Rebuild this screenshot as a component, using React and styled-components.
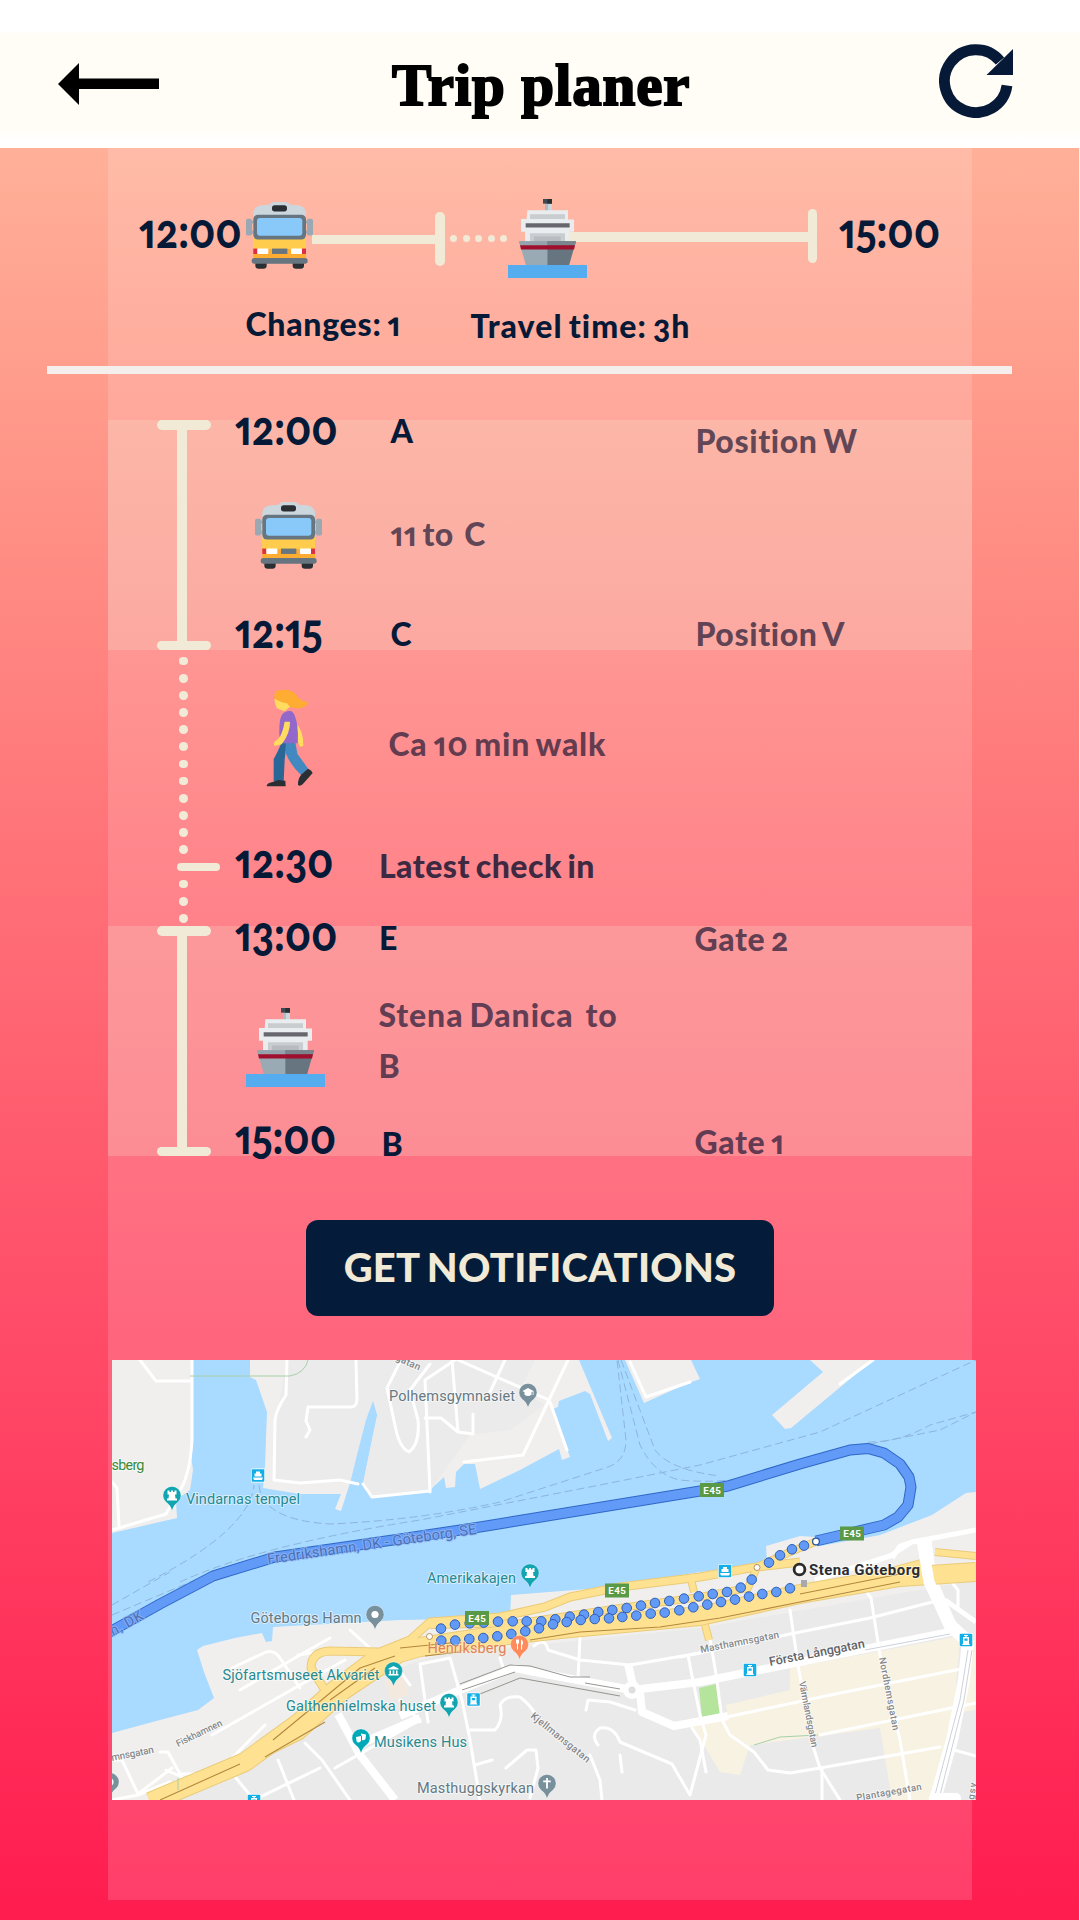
import React from "react";
import styled, { createGlobalStyle, css } from "styled-components";

const NAVY = "#061a38";
const CREAM = "#f1ead7";

const GlobalStyle = createGlobalStyle`
  *, *::before, *::after { box-sizing: border-box; }
  body {
    margin: 0;
    background: #fff;
    font-family: Lato, "Open Sans", sans-serif;
    font-variant-ligatures: none;
    font-variant-numeric: oldstyle-nums proportional-nums;
  }
`;

/* ---------- page frame ---------- */

const Page = styled.div`
  width: 1080px;
  height: 1920px;
  display: flex;
  flex-direction: column;
  overflow: hidden;
`;

const Header = styled.header`
  height: 148px;
  flex: none;
  display: grid;
  grid-template-columns: 392px 1fr 74px;
  padding: 0 67px 0 0;
  background: linear-gradient(#fff 32px, #fffdf5 33px, #fffdf5 128px, #fff 142px);
`;

const BackButton = styled.button`
  border: 0;
  padding: 63px 0 0 58px;
  background: none;
  display: flex;
  align-items: flex-start;
`;

const Title = styled.h1`
  margin: 50px 0 0;
  font: 700 59px/70px "Liberation Serif", "DejaVu Serif", serif;
  letter-spacing: 0.85px;
  color: #000;
  white-space: nowrap;
  -webkit-text-stroke: 2px #000;
`;

const RefreshButton = styled.button`
  border: 0;
  padding: 42px 0 0;
  background: none;
  display: flex;
  align-items: flex-start;
`;

const Main = styled.main`
  flex: 1;
  min-height: 0;
  padding: 0 107px 20px 108px;
  border-right: 1px solid #fff0ee;
  background: linear-gradient(#ffb098, #ff9b8b 14%, #ff7077 41.3%, #ff4766 70%, #ff1c4f);
`;

const Panel = styled.section`
  height: 100%;
  display: flex;
  flex-direction: column;
  background: rgba(255, 255, 255, 0.15);
`;

/* ---------- text ---------- */

const Time = styled.time`
  display: block;
  font-size: 48px;
  font-weight: 900;
  line-height: 20px;
  color: ${NAVY};
  white-space: nowrap;
  margin: ${(p) => p.$drop || 0}px 0 0 -1px;
  transform: scaleX(0.86);
  transform-origin: left;
`;

const tones = { strong: NAVY, medium: "#3d2a42", soft: "rgba(38, 28, 56, 0.72)" };

const Label = styled.span`
  display: block;
  font-size: 32px;
  font-weight: 900;
  line-height: ${(p) => (p.$multi ? 51 : 20)}px;
  letter-spacing: ${(p) => p.$track ?? 0.6}px;
  word-spacing: -2.5px;
  color: ${(p) => tones[p.$tone || "strong"]};
  white-space: pre;
  margin: ${(p) => p.$drop || 0}px 0 0 ${(p) => (p.$shift || 0) - 0.6}px;
`;

/* ---------- summary ---------- */

const Strip = styled.div`
  display: flex;
  align-items: center;
  height: 130px;
  padding: 51px 0 0 32px;
`;

const StripTime = styled.div`
  width: 106px;
  flex: none;
  margin-left: ${(p) => p.$gap || 0}px;
`;

const StripIcon = styled.div`
  position: relative;
  z-index: 1;
  flex: none;
  display: flex;
  margin-bottom: ${(p) => p.$lift || 0}px;
`;

const Track = styled.i`
  flex: none;
  width: ${(p) => p.$width}px;
  height: 9.5px;
  margin: ${(p) => p.$drop || 0}px 0 ${(p) => p.$lift || 0}px ${(p) => p.$under || 0}px;
  background: ${CREAM};
`;

const Stop = styled.i`
  flex: none;
  width: 9.5px;
  height: 54px;
  border-radius: 5px;
  margin-bottom: ${(p) => p.$lift || 0}px;
  background: ${CREAM};
`;

const StripDots = styled.div`
  flex: none;
  width: 63px;
  display: flex;
  gap: 5.5px;
  padding-left: 5.5px;
`;

const Dot = styled.i`
  flex: none;
  width: ${(p) => p.$size}px;
  height: ${(p) => p.$size}px;
  border-radius: 50%;
  background: ${CREAM};
`;

const Facts = styled.div`
  display: grid;
  grid-template-columns: 225px 1fr;
  height: 88px;
  padding: 35.5px 0 0 138px;
`;

const Divider = styled.hr`
  flex: none;
  width: 965px;
  height: 7.5px;
  border: 0;
  margin: 0 0 46.5px -61px;
  background: #f4efec;
`;

/* ---------- itinerary ---------- */

const Section = styled.section`
  flex: none;
  display: flex;
  height: ${(p) => p.$height}px;
  ${(p) =>
    p.$lit &&
    css`
      background: rgba(240, 235, 216, 0.22);
    `}
`;

const Rail = styled.div`
  width: 128px;
  flex: none;
  padding-left: 48.5px;
`;

const LegBar = styled.div`
  width: 54px;
  height: 100%;
  display: flex;
  flex-direction: column;
  align-items: center;
`;

const Cap = styled.i`
  width: 54px;
  height: 9.5px;
  border-radius: 5px;
  background: ${CREAM};
`;

const Stem = styled.i`
  width: 9.6px;
  flex: 1;
  margin: -3px 3px -3px 0;
  background: ${CREAM};
`;

const WalkDots = styled.div`
  display: flex;
  flex-direction: column;
  padding: 2.4px 0 0 20.5px;
`;

const DotSlot = styled.div`
  height: 17.17px;
  display: flex;
  align-items: center;
  padding-left: 2px;
`;

const Tick = styled.i`
  width: 42.5px;
  height: 8.6px;
  margin-left: -2px;
  border-radius: 4.5px;
  background: ${CREAM};
`;

const Body = styled.div`
  flex: 1;
`;

const Row = styled.div`
  display: grid;
  grid-template-columns: ${(p) => p.$first || 155}px ${(p) => 460 - (p.$first || 155)}px 1fr;
  align-items: start;
  height: ${(p) => p.$height}px;
`;

const IconCell = styled.div`
  display: flex;
  padding-left: ${(p) => p.$left}px;
  margin-top: ${(p) => p.$drop || 0}px;
`;

/* ---------- actions and map ---------- */

const NotifyButton = styled.button`
  flex: none;
  align-self: flex-start;
  width: 468px;
  height: 96px;
  margin: 64px 0 44px 198px;
  padding: 0 0 3px;
  border: 0;
  border-radius: 12px;
  background: #041c3a;
  color: ${CREAM};
  font: 900 40px/1 Lato, sans-serif;
  letter-spacing: 0.2px;
  word-spacing: -2px;
  white-space: nowrap;
`;

const MapFrame = styled.div`
  flex: none;
  width: 864px;
  height: 440px;
  margin-left: 4px;
  background: #a9daff;
`;

const MapCanvas = styled.svg`
  display: block;
`;

/* ---------- icons ---------- */

const BackArrow = () => (
  <svg width="101" height="42" viewBox="0 0 101 42">
    <path d="M0 21 21 0V15.5H101V26H21V42Z" fill="#000" />
  </svg>
);

const RefreshIcon = () => (
  <svg width="74" height="76" viewBox="0 0 74 76">
    <path d="M68 43.5A31.4 31.4 0 1 1 61 19" fill="none" stroke={NAVY} strokeWidth="10.8" />
    <path d="M74 7V33H47.5Z" fill={NAVY} />
  </svg>
);

const Bus = () => (
  <svg width="67" height="67" viewBox="0 0 201 200" preserveAspectRatio="none">
    <g fill="#9aa8b4">
      <rect x="0" y="50" width="18" height="50" rx="5" />
      <rect x="183" y="50" width="18" height="50" rx="5" />
      <rect x="12" y="56" width="177" height="8" />
      <rect x="12" y="86" width="177" height="8" />
    </g>
    <path d="M22 120V30Q26 12 48 10L70 8Q74 0 84 0H118Q128 0 132 8L154 10Q176 12 180 30V120Z" fill="#ccd6dd" />
    <rect x="78" y="10" width="45" height="18" rx="8" fill="#292f33" />
    <rect x="22" y="105" width="158" height="42" fill="#ffcc4d" />
    <rect x="22" y="138" width="158" height="32" fill="#ffac33" />
    <path d="M22 112H180V140H22Z" fill="#ffcc4d" />
    <rect x="22" y="38" width="158" height="74" rx="14" fill="#66757f" />
    <rect x="33" y="48" width="136" height="53" rx="9" fill="#88c9f9" />
    <rect x="22" y="139" width="12" height="16" fill="#dd2e44" />
    <rect x="168" y="139" width="12" height="16" fill="#dd2e44" />
    <rect x="34" y="139" width="33" height="16" rx="3" fill="#fff" />
    <rect x="135" y="139" width="33" height="16" rx="3" fill="#fff" />
    <rect x="78" y="139" width="46" height="16" fill="#66757f" />
    <path d="M28 178H62V190Q62 199 52 199H38Q28 199 28 190ZM140 178H174V190Q174 199 164 199H150Q140 199 140 190Z" fill="#292f33" />
    <rect x="17" y="167" width="168" height="17" rx="8" fill="#66757f" />
  </svg>
);

const Ship = () => (
  <svg width="79" height="79" viewBox="0 0 237 238" preserveAspectRatio="none">
    <path d="M111 12H132V36H111Z" fill="#aebbc3" />
    <path d="M120 12H132V36H120Z" fill="#ccd6dd" />
    <path d="M105 0H132V14H105Z" fill="#3e4a52" />
    <path d="M118 0H132V14H118Z" fill="#292f33" />
    <path d="M58 34H180V62H198V99H185V127H51V99H39V60H56Z" fill="#e9edf0" />
    <path d="M66 46H171V60H66ZM66 103H171V127H66Z" fill="#c9cdd0" />
    <path d="M78 113H158V127H78Z" fill="#b8bcc0" />
    <path d="M53 73H185V86H53Z" fill="#66676e" />
    <path d="M33 127H118V200H54Z" fill="#99aab5" />
    <path d="M118 127H204L183 200H118Z" fill="#66757f" />
    <path d="M33 127H118V139H36Z" fill="#95a3ac" />
    <path d="M118 127H204L201 139H118Z" fill="#7a858d" />
    <path d="M36 139H201L198 152H39Z" fill="#a00f2e" />
    <path d="M0 199H237V238H0Z" fill="#55acee" />
  </svg>
);

const Walker = () => (
  <svg width="47" height="98" viewBox="77 58 141 294" preserveAspectRatio="none">
    <path d="M166 160Q190 182 189 229L179 231Q172 228 172 190Z" fill="#ffdc5d" />
    <path d="M124 218H139L133 270 130 336H100V268Q110 252 124 218Z" fill="#2a6797" />
    <path d="M136 218H165L171 252 204 298 182 316Q150 286 136 250Z" fill="#4289c1" />
    <path d="M117 190Q116 150 125 135Q137 120 154 125Q166 133 171 170Q174 195 172 221H119Z" fill="#9268ca" />
    <path d="M133 156H149Q150 190 124 224L103 229Q98 222 104 215Q125 205 133 156Z" fill="#ffdc5d" />
    <path d="M102 88H142L152 108 138 120Q138 124 130 124L110 116Q104 106 102 88Z" fill="#ffdc5d" />
    <path d="M102 86Q100 66 116 62Q150 55 166 74Q182 98 204 97Q200 110 182 115Q150 120 140 101Q122 100 102 86Z" fill="#ffac33" />
    <path d="M79 348Q80 339 100 336L114 331Q132 334 135 333L136 350H79Z" fill="#292f33" />
    <path d="M203 297Q214 301 217 310L187 344Q177 352 173 345Q172 328 184 314Z" fill="#292f33" />
  </svg>
);

/* ---------- map ---------- */

const LAND = [
  "M112 1360H192V1446L191 1456 193 1470 190 1490 176 1500 177 1518 112 1533Z",
  "M250 1360V1377L256 1380 267 1412 265 1465 263 1488 300 1494 341 1494 335 1509 341 1511 350 1483 357 1455 366 1420 373 1401 377 1415 363 1484 371 1498 430 1491 432 1488 444 1477 446 1488 455 1487 456 1472 464 1464 475 1464 480 1489 520 1470 559 1449 562 1460 570 1457 553 1409 558 1407 559 1401 585 1391 590 1394 608 1441 612 1438 579 1360Z",
  "M625 1360 644 1403 686 1384 700 1379 691 1360Z",
  "M810 1360 823 1372 772 1415 785 1429 791 1428 873 1360Z",
  "M112 1733 160 1720 198 1710 214 1698 204 1672 197 1650 203 1646 235 1638 262 1633 266 1642 272 1641 273 1627 290 1626 400 1620 510 1618 511 1595 600 1588 700 1572 767 1563 766 1546 800 1536 815 1537 820 1546 880 1535 932 1515 966 1493 976 1492V1800H112Z",
];

const ROADS_THIN = [
  "M140 1360 156 1381H192M192 1360V1440Q190 1478 177 1495L166 1514 112 1530M112 1482 117 1488 119 1526",
  "M287 1360 286 1395Q276 1410 275 1420L274 1480 300 1483 340 1480 358 1484M356 1360 357 1400Q356 1408 350 1407H308L306 1421 310 1430 306 1437M363 1484 372 1497 430 1491",
  "M400 1362 387 1388 396 1430Q400 1448 409 1452Q420 1444 418 1420L410 1390 430 1364M430 1492 425 1380 455 1360M452 1360 458 1432 473 1434V1414M425 1418H441L458 1432M458 1360 549 1400M505 1360 490 1392M568 1360 549 1400 523 1455 464 1462M550 1402 567 1450",
  "M630 1362 646 1397 690 1382M840 1384 873 1360",
  "M232 1668 266 1652Q275 1650 280 1658L300 1688M240 1690 300 1655 330 1638M298 1655 345 1648M212 1735 300 1685 345 1660M160 1752 168 1752 180 1774H200L230 1760 265 1725M112 1760H122L138 1794 172 1768M112 1800 138 1795 170 1782M166 1770 182 1777",
  "M278 1760 294 1800M305 1743 322 1760 350 1800M335 1768 420 1720M236 1778 254 1800M254 1800 320 1768M420 1722 400 1700M385 1650 410 1685M350 1630 372 1650",
  "M420 1664 428 1722M420 1664 450 1658 462 1700M500 1658 504 1670M462 1700 470 1740 480 1800M470 1730H495Q504 1720 500 1705Q505 1695 520 1697Q530 1705 534 1712M590 1755 600 1780 602 1800M475 1765 492 1760M506 1768 527 1750H536L538 1768 530 1798",
  "M534 1646Q545 1636 548 1650L580 1660 630 1665 700 1653M580 1638 578 1678M708 1627 716 1674 722 1720M586 1710 588 1700 610 1702 635 1710M598 1745Q590 1735 600 1728Q614 1726 620 1742L672 1764 690 1795M620 1755 622 1772M688 1655 692 1676 700 1715 706 1735 690 1795M790 1610 798 1665 811 1740 820 1768 840 1800",
  "M680 1657 800 1632 870 1618 940 1600M865 1590 871 1598 880 1655 900 1740 910 1800M722 1718 840 1693 966 1668M722 1720 730 1735 754 1752 768 1770 790 1773 820 1768 940 1747M820 1735 976 1703M954 1750 976 1756M950 1580 958 1590V1608M822 1768 822 1800M692 1728 700 1740 706 1772",
];

const ROADS_WIDE = [
  "M400 1716 460 1690 515 1668 545 1674 632 1690 700 1682 800 1662 960 1630",
  "M640 1692 642 1712 674 1726 728 1716",
  "M338 1714 360 1755 395 1800M355 1746 420 1718M628 1664 634 1690",
];

const YELLOW = [
  { d: "M150 1802 245 1762 300 1722 335 1690 375 1660 420 1647 480 1638 560 1629 700 1616 800 1594 900 1577 976 1572", w: 18 },
  { d: "M245 1762 300 1735 345 1695 400 1658", w: 8 },
  { d: "M325 1690 311 1668Q311 1652 330 1651L380 1652 410 1640 430 1622 500 1617 545 1607 570 1597 620 1587 700 1577 750 1568 800 1562", w: 7 },
  { d: "M430 1625 520 1623 620 1608 700 1597 748 1588 757 1567 790 1552 815 1542", w: 6 },
  { d: "M690 1575 694 1592M705 1625 709 1640M935 1552 976 1556M820 1590 880 1574 925 1562", w: 6 },
];

const FERRY = [
  "M148 1582Q250 1530 254 1485",
  "M259 1485Q262 1520 330 1524 420 1520 500 1502L605 1468Q626 1462 626 1440L617 1360",
  "M180 1582Q260 1545 420 1520L600 1485 700 1465 820 1432 976 1360",
  "M618 1360 640 1445Q655 1475 680 1480 730 1485 780 1470L870 1442Q900 1442 930 1425L976 1412",
  "M621 1360 655 1450Q670 1470 720 1476",
  "M112 1605 170 1572M112 1615 200 1578M870 1444 940 1430 976 1412",
];

const ROUTE =
  "M108 1633 160 1604 213 1576 275 1557 400 1539 480 1527 700 1491 728 1486 800 1464 850 1450 868 1448.5 884 1453 900 1464 909 1477 911 1487 908 1505 898 1517 884 1525 850 1533 816 1541";

const WALK_DOTS = [
  [441, 1628.6], [455, 1624.6], [469.7, 1623.3], [483.7, 1622.6], [498, 1621.6], [512.7, 1621.3], [526.7, 1621.3],
  [541.3, 1621.3], [555.3, 1619.3], [569.7, 1616.6], [584, 1614.6], [598.3, 1612], [612.3, 1610], [626.7, 1608],
  [641, 1605.6], [655, 1603], [669.3, 1601], [684, 1598.6], [698.7, 1596.3], [712.7, 1594], [727, 1592], [740.7, 1587.6],
  [751.7, 1579.6], [769, 1562.6], [780, 1555.3], [792, 1549.3], [804, 1545.6],
  [441.3, 1640.6], [455.3, 1640.6], [469.3, 1639], [483.3, 1638], [497.3, 1636.3], [511.3, 1634], [525.3, 1631.3],
  [539, 1628.3], [553, 1624.3], [566.7, 1622], [580.7, 1620], [594.7, 1619], [609, 1618.3], [622.3, 1617], [636.3, 1615.6],
  [650.7, 1613.6], [664.7, 1612.6], [679.3, 1610.3], [693.3, 1607.3], [707.3, 1604.6], [721, 1602], [735, 1599.6],
  [749, 1596.6], [762.3, 1594], [776.3, 1592], [790, 1588.3],
];

const TEAL = "#258a91";
const SLATE = "#647983";

const PLACES = [
  { t: "Polhemsgymnasiet", x: 389, y: 1401, w: 126, c: SLATE },
  { t: "Vindarnas tempel", x: 186, y: 1504, w: 114, c: TEAL },
  { t: "sberg", x: 111.5, y: 1470, w: 33, c: "#3a8a3a" },
  { t: "Amerikakajen", x: 427, y: 1582.5, w: 89, c: TEAL },
  { t: "Göteborgs Hamn", x: 250.5, y: 1623, w: 111, c: SLATE },
  { t: "Sjöfartsmuseet Akvariet", x: 222.5, y: 1680, w: 157, c: TEAL },
  { t: "Galthenhielmska huset", x: 286, y: 1711, w: 150, c: TEAL },
  { t: "Musikens Hus", x: 374, y: 1747, w: 93, c: TEAL },
  { t: "Masthuggskyrkan", x: 417, y: 1792.5, w: 117, c: SLATE },
];

const STREETS = [
  { t: "Första Långgatan", x: 770, y: 1666, w: 97, r: -11, s: 12.5, c: "#5f6368" },
  { t: "Masthamnsgatan", x: 701, y: 1653, w: 80, r: -11, s: 10 },
  { t: "Fiskhamnen", x: 178, y: 1747, w: 50, r: -26, s: 9.5 },
  { t: "mnsgatan", x: 112, y: 1761, w: 43, r: -11, s: 10 },
  { t: "Kjellmansgatan", x: 530, y: 1717, w: 73, r: 39, s: 10 },
  { t: "Värmlandsgatan", x: 799, y: 1682, w: 67, r: 79, s: 9.5 },
  { t: "Nordhemsgatan", x: 879, y: 1658, w: 74, r: 79, s: 9.5 },
  { t: "Plantagegatan", x: 857, y: 1801, w: 66, r: -10, s: 9.5 },
  { t: "gatan", x: 395, y: 1360, w: 26, r: 24, s: 10 },
  { t: "gsv", x: 974, y: 1800, w: 17, r: -82, s: 9.5 },
];

const PINS = [
  { x: 172, y: 1495.5, c: "#12a5b0", k: "tower" },
  { x: 528, y: 1392.5, c: "#78909c", k: "cap" },
  { x: 530, y: 1573, c: "#12a5b0", k: "tower" },
  { x: 375, y: 1614.5, c: "#78909c", k: "dot" },
  { x: 393.5, y: 1671, c: "#12a5b0", k: "museum" },
  { x: 449, y: 1702.5, c: "#12a5b0", k: "tower" },
  { x: 361, y: 1738, c: "#00a9b8", k: "mask" },
  { x: 519.5, y: 1644.5, c: "#ff8a5c", k: "food" },
  { x: 547, y: 1783.5, c: "#78909c", k: "cross" },
  { x: 110, y: 1782, c: "#78909c", k: "dot" },
];

const GLYPHS = {
  tower: <path d="M-4.5-5H-2.5V-3.5H-1V-5H1V-3.5H2.5V-5H4.5V-1H3L3.5 3H5V5H-5V3H-3.5L-3-1H-4.5Z" fill="#fff" />,
  cap: <path d="M-5.5-1.5 0-4.5 5.5-1.5V2.5H4.7V-1L3.5-.3V2.2Q0 4.6-3.5 2.2V-.3Z" fill="#fff" />,
  dot: <circle r="3.6" fill="#fff" />,
  museum: <path d="M0-5 5-2.5V-1.5H-5V-2.5ZM-4-.5H-2.5V3H-4ZM-.8-.5H.8V3H-.8ZM2.5-.5H4V3H2.5ZM-5 3H5V4.5H-5Z" fill="#fff" />,
  mask: <path d="M-5-1 0-2 0 3Q-3 6-4.5 3ZM0-4.5 5-3.5 4.5 1Q3 3 1 2V-2.5H0Z" fill="#fff" />,
  food: <path d="M-3.5-5V-1.5L-2.5-.5V5H-1.5V-.5L-.5-1.5V-5M1.5 5V-5Q4-4 3.5 0H2.6V5Z" fill="#fff" />,
  cross: <path d="M-.9-5.5H.9V-3H3.8V-1.2H.9V5H-.9V-1.2H-3.8V-3H-.9Z" fill="#fff" />,
};

const Pin = ({ x, y, c, k }) => (
  <g transform={`translate(${x} ${y})`}>
    <path d="M0 15Q-2 9-6 6.6A9 9 0 1 1 6 6.6Q2 9 0 15Z" fill={c} stroke="#fff" strokeOpacity=".5" strokeWidth=".6" />
    {GLYPHS[k]}
  </g>
);

const Transit = ({ x, y, ferry }) => (
  <g transform={`translate(${x} ${y})`}>
    <rect x="-7" y="-7" width="14" height="14" rx="1.5" fill="#fff" />
    <rect x="-6.3" y="-6.3" width="12.6" height="12.6" rx="1" fill="#12aee6" />
    {ferry ? (
      <path d="M-2-4H2V-2H3.5V1H-3.5V-2H-2ZM-5 2H5L4 4.5H-4Z" fill="#fff" />
    ) : (
      <path d="M-2-5H2V-4H.6V-3H3V3.5L4 5H-4L-3 3.5V-3H-.6V-4H-2ZM-1.6-1.4V.8H1.6V-1.4Z" fill="#fff" fillRule="evenodd" />
    )}
  </g>
);

const MapLabel = styled.text`
  font-family: Roboto, sans-serif;
  font-variant-numeric: lining-nums;
  font-size: ${(p) => p.$size || 14.5}px;
  font-weight: ${(p) => p.$weight || 400};
  paint-order: stroke;
  stroke: ${(p) => p.$halo || "rgba(255,255,255,.55)"};
  stroke-width: ${(p) => (p.$halo === "none" ? 0 : 2)}px;
  stroke-linejoin: round;
`;

const RouteMap = () => (
  <MapCanvas width="864" height="440" viewBox="112 1360 864 440">
    <rect x="112" y="1360" width="864" height="440" fill="#a9daff" />
    {LAND.map((d) => (
      <path key={d} d={d} fill="#f0efee" />
    ))}
    <path d="M287 1360H535L520 1390 545 1405 510 1430 470 1435 430 1491 371 1498 363 1484 377 1415 373 1401 350 1483 276 1480V1420Z" fill="#ebebeb" />
    <path d="M150 1802 300 1740 360 1680 440 1655 700 1628 976 1580V1800Z" fill="#eaeaea" />
    <path d="M373 1401 377 1415 362 1484H350L357 1455 366 1420Z" fill="#a9daff" />
    <path d="M790 1668 960 1636 955 1700 940 1800H892L880 1728 750 1745 740 1775 720 1772 692 1725 728 1716 726 1705 790 1690Z" fill="#f8f2e2" />
    <path d="M965 1640H976V1710L962 1712Z" fill="#f8f2e2" />
    <path d="M699 1688 716 1684 721 1715 702 1718Z" fill="#b5e59c" />
    <path d="M385 1680 405 1672 408 1695 390 1700Z" fill="#f3e9df" />

    <g fill="none" stroke="#fff" strokeWidth="3" strokeLinejoin="round" strokeLinecap="round">
      {ROADS_THIN.map((d) => (
        <path key={d} d={d} />
      ))}
    </g>
    <g fill="none" stroke="#fff" strokeWidth="8" strokeLinejoin="round">
      {ROADS_WIDE.map((d) => (
        <path key={d} d={d} />
      ))}
      <path d="M968 1640 964 1680 952 1740 935 1800" strokeWidth="12" />
      <path d="M925 1540 930 1580 950 1625 966 1640" strokeWidth="13" />
      <path d="M815 1580 890 1556 912 1542 976 1530M892 1558 900 1546 912 1542M945 1600 976 1622" strokeWidth="5" />
    </g>
    <circle cx="632" cy="1690" r="9" fill="#fff" />
    <circle cx="632" cy="1690" r="3.5" fill="#dedede" />
    <g fill="none" stroke="#8d8a86" strokeWidth=".9">
      <path d="M460 1684 510 1665 530 1666 570 1677H590M462 1690 515 1672M475 1696 520 1678 620 1696M585 1683 620 1689" />
      <path d="M968 1650 960 1700 935 1795M972 1650 964 1700 940 1795M865 1650 950 1634" stroke="#c6ccd6" />
    </g>

    <g fill="none" strokeLinejoin="round">
      {YELLOW.map((r) => (
        <path key={r.d} d={r.d} stroke="#eacb79" strokeWidth={r.w + 2} />
      ))}
      {YELLOW.map((r) => (
        <path key={r.d} d={r.d} stroke="#fee292" strokeWidth={r.w} />
      ))}
      <path
        d="M160 1800 240 1764M273 1740 330 1693 360 1668 395 1656M265 1757 325 1722M330 1700 375 1668M400 1648 460 1642M425 1656 460 1652M530 1640 580 1632 660 1627 720 1618 800 1602 900 1582M800 1594 900 1574"
        stroke="#b3883f"
        strokeWidth="1.1"
      />
    </g>
    <g fill="none" stroke="#fff" strokeWidth="11">
      <path d="M922 1540 929 1582 948 1622" />
    </g>

    <g fill="none" stroke="#8db5dc" strokeWidth="1" strokeDasharray="8 4">
      {FERRY.map((d) => (
        <path key={d} d={d} />
      ))}
    </g>
    <path d="M190 1376H290Q305 1373 308 1360M754 1745 780 1737 818 1735M178 1790V1778" fill="none" stroke="#a8d0a8" strokeWidth="1" />

    <path d={ROUTE} fill="none" stroke="#2f68c6" strokeWidth="11" strokeLinejoin="round" />
    <path d={ROUTE} fill="none" stroke="#629af8" strokeWidth="9" strokeLinejoin="round" />
    <g fill="#629af8" stroke="#2f5fb4" strokeWidth="1">
      {WALK_DOTS.map(([x, y]) => (
        <circle key={`${x}-${y}`} cx={x} cy={y} r="4.8" />
      ))}
    </g>
    <circle cx="816" cy="1541.5" r="3.4" fill="#fff" stroke="#28599f" strokeWidth="1.3" />
    <circle cx="757" cy="1567.5" r="3" fill="#fff" stroke="#b5935f" strokeWidth="1" />
    <circle cx="429.5" cy="1636.5" r="3" fill="#fff" stroke="#b5935f" strokeWidth="1" />

    <MapLabel x="268" y="1564" $size={14.5} $halo="rgba(147,184,244,.75)" fill="#4a70b8" textLength="211" transform="rotate(-8.2 268 1564)">
      Fredrikshamn, DK - Göteborg, SE
    </MapLabel>
    <MapLabel x="113" y="1636" $size={14.5} $halo="rgba(147,184,244,.75)" fill="#4a70b8" textLength="36" transform="rotate(-29 113 1636)">
      n, DK
    </MapLabel>

    {STREETS.map((s) => (
      <MapLabel key={s.t} x={s.x} y={s.y} $size={s.s} $weight={500} fill={s.c || "#85878a"} textLength={s.w} transform={`rotate(${s.r} ${s.x} ${s.y})`}>
        {s.t}
      </MapLabel>
    ))}
    {PLACES.map((p) => (
      <MapLabel key={p.t} x={p.x} y={p.y} fill={p.c} textLength={p.w}>
        {p.t}
      </MapLabel>
    ))}
    <MapLabel x="427.5" y="1653" fill="#e07f5c" textLength="79" $halo="rgba(255,240,200,.4)">
      Henriksberg
    </MapLabel>

    {PINS.map((p) => (
      <Pin key={`${p.x}-${p.y}`} {...p} />
    ))}
    <Transit x={258} y={1475.5} ferry />
    <Transit x={725} y={1571} ferry />
    <Transit x={473.5} y={1699.5} />
    <Transit x={750} y={1670} />
    <Transit x={966} y={1640} />
    <Transit x={254} y={1801} />

    {[[712, 1490], [852, 1533.5], [477, 1618], [617, 1590.5]].map(([x, y]) => (
      <g key={x}>
        <rect x={x - 12} y={y - 7} width="24" height="14" fill="#5a9a46" />
        <MapLabel x={x} y={y + 3.6} $size={9.8} $weight={700} $halo="none" fill="#fff" textAnchor="middle" textLength="17.5">
          E45
        </MapLabel>
      </g>
    ))}

    <path d="M801 1580H807V1587H801Z" fill="#a9a9a9" />
    <circle cx="799.5" cy="1569.5" r="5.4" fill="#fff" stroke="#2b2b2b" strokeWidth="2.8" />
    <MapLabel x="809" y="1574.5" $size={15} $weight={700} fill="#2b2d33" textLength="111">
      Stena Göteborg
    </MapLabel>
    <rect x="929" y="1793" width="32" height="12" rx="5" fill="#fff" />
  </MapCanvas>
);

/* ---------- screen ---------- */

const LegRail = () => (
  <Rail>
    <LegBar>
      <Cap />
      <Stem />
      <Cap />
    </LegBar>
  </Rail>
);

export default function App() {
  return (
    <>
      <GlobalStyle />
      <Page>
        <Header>
          <BackButton aria-label="Back">
            <BackArrow />
          </BackButton>
          <Title>Trip planer</Title>
          <RefreshButton aria-label="Refresh">
            <RefreshIcon />
          </RefreshButton>
        </Header>

        <Main>
          <Panel>
            <Strip>
              <StripTime>
                <Time $drop={-17.5}>12:00</Time>
              </StripTime>
              <StripIcon $lift={6}>
                <Bus />
              </StripIcon>
              <Track $width={123} $under={-1} $drop={2} />
              <Stop />
              <StripDots>
                {[0, 1, 2, 3, 4].map((i) => (
                  <Dot key={i} $size={7} />
                ))}
              </StripDots>
              <StripIcon>
                <Ship />
              </StripIcon>
              <Track $width={240} $under={-19} $lift={3} />
              <Stop $lift={5} />
              <StripTime $gap={22.5}>
                <Time $drop={-17.5}>15:00</Time>
              </StripTime>
            </Strip>

            <Facts>
              <Label $track={0.75}>Changes: 1</Label>
              <Label $track={1.05} $drop={2}>Travel time: 3h</Label>
            </Facts>

            <Divider />

            <Section $height={230} $lit>
              <LegRail />
              <Body>
                <Row $height={82}>
                  <Time $drop={-3.5}>12:00</Time>
                  <Label $drop={0.6}>A</Label>
                  <Label $tone="soft" $drop={10.6}>Position W</Label>
                </Row>
                <Row $height={121}>
                  <IconCell $left={19}>
                    <Bus />
                  </IconCell>
                  <Label $tone="soft" $track={0.3} $drop={21.5}>11 to  C</Label>
                </Row>
                <Row $height={27}>
                  <Time $drop={-3.5}>12:15</Time>
                  <Label $drop={0.6}>C</Label>
                  <Label $tone="soft" $drop={0.6}>Position V</Label>
                </Row>
              </Body>
            </Section>

            <Section $height={276}>
              <Rail>
                <WalkDots>
                  {Array.from({ length: 16 }, (_, i) => (
                    <DotSlot key={i}>{i === 12 ? <Tick /> : <Dot $size={8.8} />}</DotSlot>
                  ))}
                </WalkDots>
              </Rail>
              <Body>
                <Row $height={202} $first={153}>
                  <IconCell $left={29.5} $drop={39}>
                    <Walker />
                  </IconCell>
                  <Label $tone="soft" $track={0.8} $drop={83.5}>Ca 10 min walk</Label>
                </Row>
                <Row $height={74} $first={144}>
                  <Time $drop={-2}>12:30</Time>
                  <Label $tone="medium" $track={0.5} $shift={-0.5} $drop={3.5}>Latest check in</Label>
                </Row>
              </Body>
            </Section>

            <Section $height={230} $lit>
              <LegRail />
              <Body>
                <Row $height={82} $first={144}>
                  <Time $drop={-3.5}>13:00</Time>
                  <Label $shift={-0.5} $drop={1.5}>E</Label>
                  <Label $tone="soft" $drop={2.5} $shift={-1}>Gate 2</Label>
                </Row>
                <Row $height={121} $first={143}>
                  <IconCell $left={10}>
                    <Ship />
                  </IconCell>
                  <Label $tone="soft" $multi $track={0.9} $drop={-19}>{"Stena Danica  to\nB"}</Label>
                </Row>
                <Row $height={27} $first={146}>
                  <Time $drop={-3.5}>15:00</Time>
                  <Label $drop={5}>B</Label>
                  <Label $tone="soft" $drop={2.5} $shift={-1}>Gate 1</Label>
                </Row>
              </Body>
            </Section>

            <NotifyButton>GET NOTIFICATIONS</NotifyButton>

            <MapFrame>
              <RouteMap />
            </MapFrame>
          </Panel>
        </Main>
      </Page>
    </>
  );
}
